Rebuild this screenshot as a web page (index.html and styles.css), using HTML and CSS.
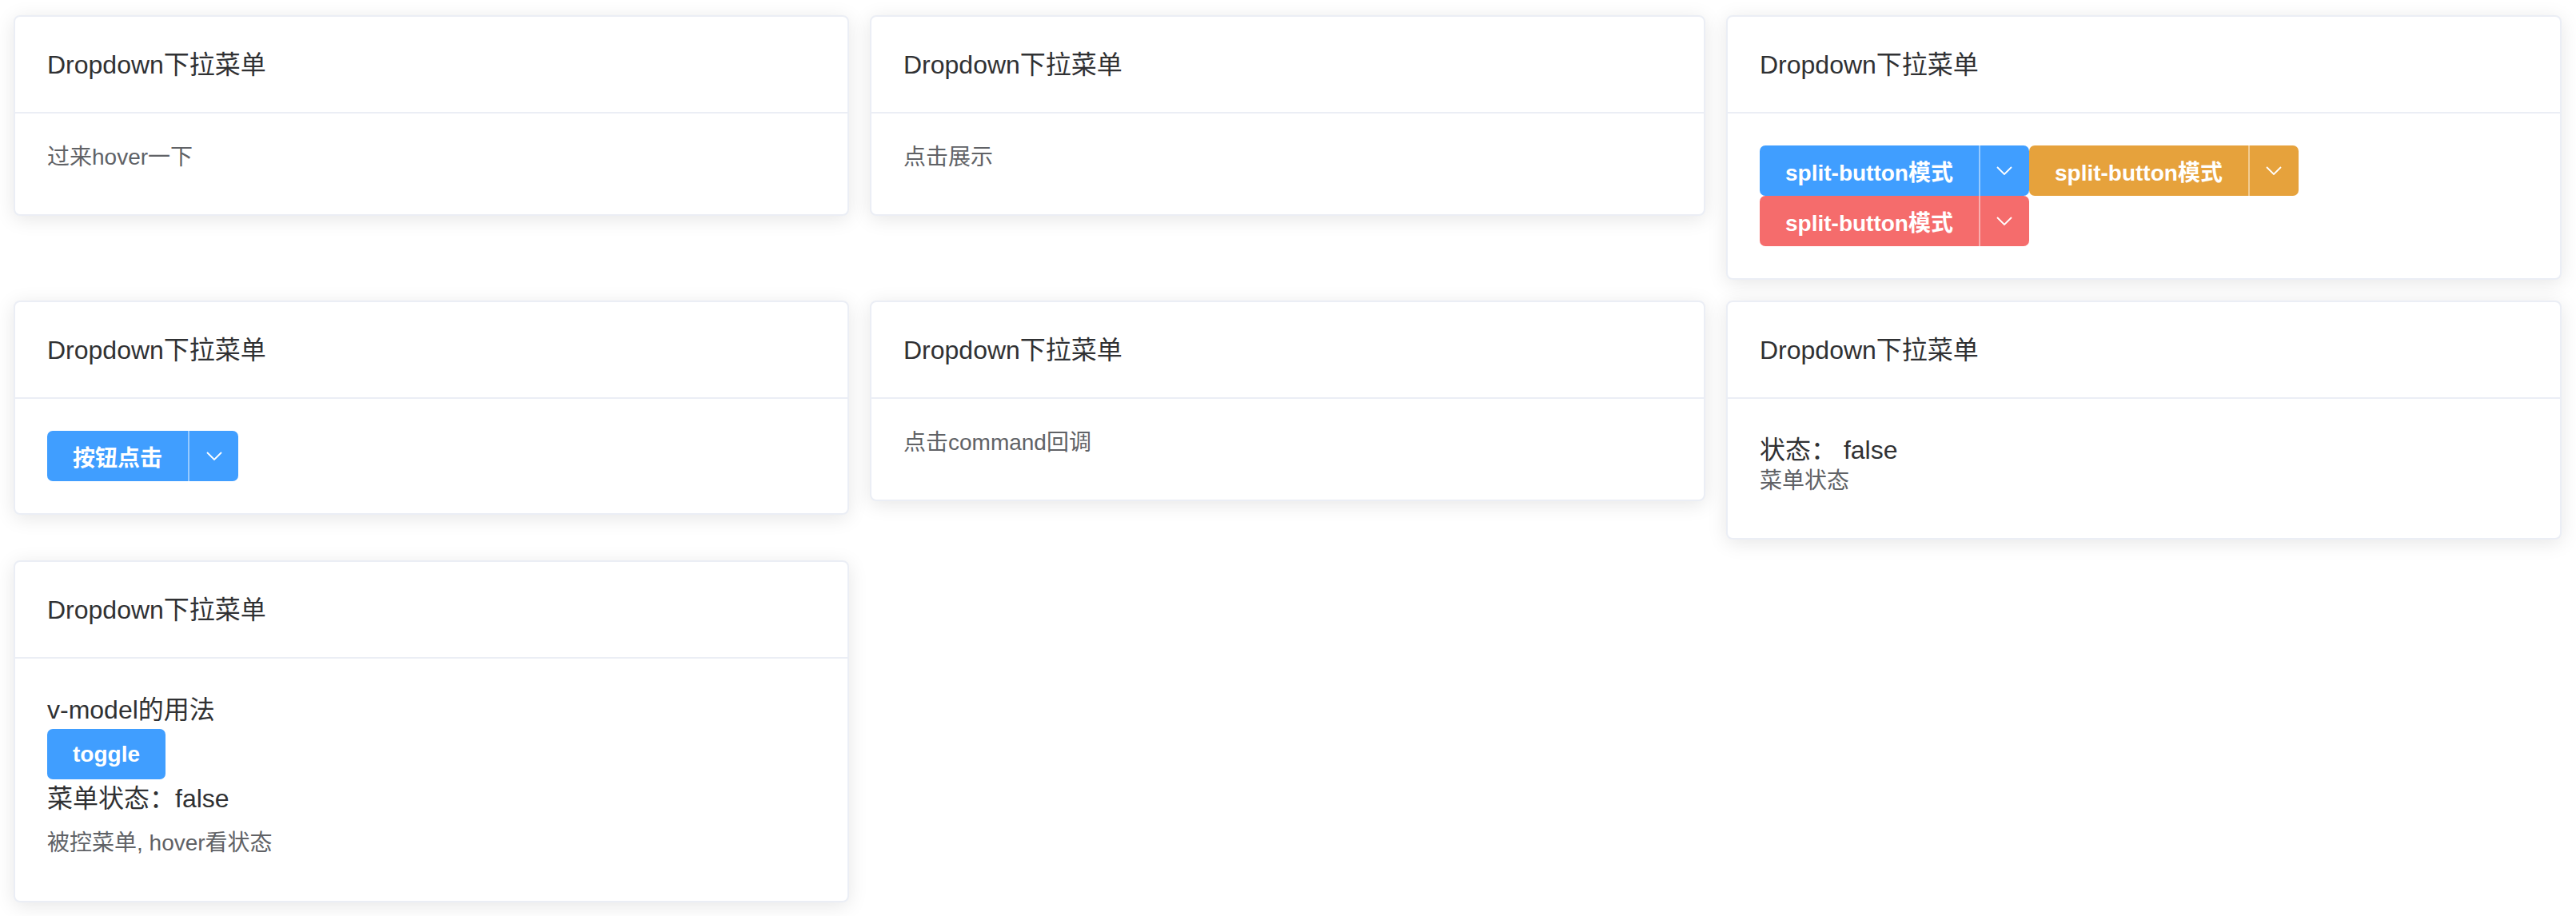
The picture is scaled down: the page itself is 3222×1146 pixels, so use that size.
FILE: index.html
```html
<!DOCTYPE html>
<html lang="zh-CN">
<head>
<meta charset="utf-8">
<title>Dropdown</title>
<link rel="stylesheet" href="styles.css">
</head>
<body>
<div class="page">
  <div class="grid">
    <section class="card">
      <div class="card-header">Dropdown下拉菜单</div>
      <div class="card-body"><span class="dd">过来hover一下</span></div>
    </section>

    <section class="card">
      <div class="card-header">Dropdown下拉菜单</div>
      <div class="card-body"><span class="dd">点击展示</span></div>
    </section>

    <section class="card">
      <div class="card-header">Dropdown下拉菜单</div>
      <div class="card-body">
        <div class="btn-row">
          <div class="split primary">
            <span class="btn-main">split-button模式</span>
            <span class="btn-caret"><svg width="20" height="11" viewBox="0 0 20 11"><polyline points="1,1 10,10 19,1" fill="none" stroke="#fff" stroke-width="1.8"/></svg></span>
          </div>
          <div class="split warning">
            <span class="btn-main">split-button模式</span>
            <span class="btn-caret"><svg width="20" height="11" viewBox="0 0 20 11"><polyline points="1,1 10,10 19,1" fill="none" stroke="#fff" stroke-width="1.8"/></svg></span>
          </div>
          <div class="split danger">
            <span class="btn-main">split-button模式</span>
            <span class="btn-caret"><svg width="20" height="11" viewBox="0 0 20 11"><polyline points="1,1 10,10 19,1" fill="none" stroke="#fff" stroke-width="1.8"/></svg></span>
          </div>
        </div>
      </div>
    </section>

    <section class="card">
      <div class="card-header">Dropdown下拉菜单</div>
      <div class="card-body">
        <div class="btn-row">
          <div class="split primary">
            <span class="btn-main">按钮点击</span>
            <span class="btn-caret"><svg width="20" height="11" viewBox="0 0 20 11"><polyline points="1,1 10,10 19,1" fill="none" stroke="#fff" stroke-width="1.8"/></svg></span>
          </div>
        </div>
      </div>
    </section>

    <section class="card">
      <div class="card-header">Dropdown下拉菜单</div>
      <div class="card-body"><span class="dd">点击command回调</span></div>
    </section>

    <section class="card">
      <div class="card-header">Dropdown下拉菜单</div>
      <div class="card-body">
        <div class="line">状态： false</div>
        <div class="sub"><span class="dd">菜单状态</span></div>
      </div>
    </section>

    <section class="card">
      <div class="card-header">Dropdown下拉菜单</div>
      <div class="card-body">
        <div class="line">v-model的用法</div>
        <div class="btn-row"><span class="btn primary">toggle</span></div>
        <div class="line">菜单状态：false</div>
        <div class="note">被控菜单, hover看状态</div>
      </div>
    </section>
  </div>
</div>
</body>
</html>
```

FILE: styles.css
```css
html, body {
  margin: 0;
  background: #ffffff;
}

body {
  font-family: "Liberation Sans", "Noto Sans CJK SC", sans-serif;
  color: #303133;
}

.page {
  padding: 19px 18px 19px 17px;
}

.grid {
  display: grid;
  grid-template-columns: repeat(3, 1fr);
  column-gap: 26px;
  row-gap: 26px;
  align-items: start;
}

.card {
  background: #ffffff;
  border: 2px solid #ebeef5;
  border-radius: 8px;
  box-shadow: 0 4px 24px rgba(0, 0, 0, 0.1);
  overflow: hidden;
}

.card-header {
  padding: 36px 40px 35px;
  font-size: 32px;
  line-height: 48px;
  border-bottom: 2px solid #ebeef5;
  color: #303133;
}

.card-body {
  padding: 40px;
  font-size: 32px;
  line-height: 46px;
}

.dd {
  display: inline-block;
  vertical-align: top;
  font-size: 28px;
  line-height: 30px;
  color: #606266;
}

.line {
  font-size: 32px;
  line-height: 48px;
  color: #303133;
}

.sub {
  line-height: 46px;
}

.note {
  font-size: 28px;
  line-height: 64px;
  color: #606266;
}

.btn-row {
  display: flex;
  flex-wrap: wrap;
  line-height: normal;
}

.split {
  display: flex;
  height: 63px;
  border-radius: 7px;
  overflow: hidden;
}

.btn-main,
.btn {
  display: flex;
  align-items: center;
  box-sizing: border-box;
  height: 63px;
  padding: 0 32px;
  font-size: 28px;
  font-weight: 700;
  color: #ffffff;
  white-space: nowrap;
}

.btn {
  border-radius: 7px;
}

.btn-caret {
  display: flex;
  align-items: center;
  justify-content: center;
  box-sizing: border-box;
  width: 63px;
  height: 63px;
  border-left: 2px solid rgba(255, 255, 255, 0.45);
}

.primary { background: #409eff; }
.warning { background: #e6a23c; }
.danger  { background: #f56c6c; }
```
